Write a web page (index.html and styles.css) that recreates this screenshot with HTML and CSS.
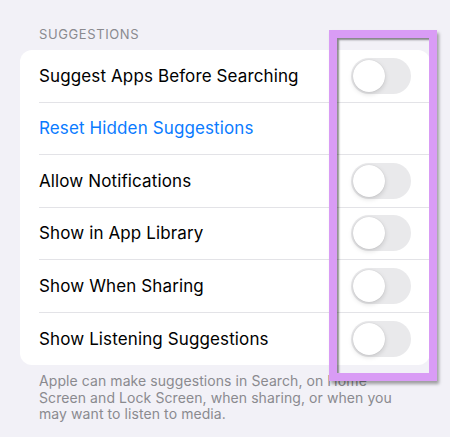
FILE: index.html
```html
<!DOCTYPE html>
<html>
<head>
<meta charset="utf-8">
<link rel="stylesheet" href="styles.css">
</head>
<body>
<div class="page">
  <div class="section-header">SUGGESTIONS</div>
  <div class="card">
    <div class="row"><span class="label">Suggest Apps Before Searching</span><span class="toggle"><span class="knob"></span></span></div>
    <div class="row"><span class="label link">Reset Hidden Suggestions</span></div>
    <div class="row"><span class="label">Allow Notifications</span><span class="toggle"><span class="knob"></span></span></div>
    <div class="row"><span class="label">Show in App Library</span><span class="toggle"><span class="knob"></span></span></div>
    <div class="row"><span class="label">Show When Sharing</span><span class="toggle"><span class="knob"></span></span></div>
    <div class="row"><span class="label">Show Listening Suggestions</span><span class="toggle"><span class="knob"></span></span></div>
  </div>
  <div class="footer">Apple can make suggestions in Search, on Home<br>Screen and Lock Screen, when sharing, or when you<br>may want to listen to media.</div>
  <div class="highlight"></div>
</div>
</body>
</html>
```
FILE: styles.css
```css
html, body {
  margin: 0;
  padding: 0;
  background: #f2f1f7;
}
.page {
  position: relative;
  width: 450px;
  height: 437px;
  overflow: hidden;
  font-family: Inter, "Liberation Sans", Arial, sans-serif;
}
.section-header {
  padding: 26px 0 0 39px;
  height: 24px;
  font-size: 13px;
  letter-spacing: 0.6px;
  color: #8a8a8f;
  line-height: 16px;
}
.card {
  margin: 0 20px 0 20px;
  background: #ffffff;
  border-radius: 12px;
  padding-left: 19px;
}
.row {
  display: flex;
  align-items: center;
  justify-content: space-between;
  height: 52.5px;
  padding-right: 19px;
  border-bottom: 1px solid #e3e3e7;
  box-sizing: border-box;
}
.row:last-child {
  border-bottom: none;
}
.label {
  font-size: 17px;
  letter-spacing: 0.12px;
  color: #000;
}
.link {
  color: #0a7bff;
}
.toggle {
  position: relative;
  width: 60px;
  height: 36px;
  border-radius: 18px;
  background: #e9e9eb;
}
.knob {
  position: absolute;
  left: 2px;
  top: 2px;
  width: 32px;
  height: 32px;
  border-radius: 50%;
  background: #fff;
  box-shadow: 0 2px 5px rgba(0,0,0,0.15), 0 0 1px rgba(0,0,0,0.15);
}
.footer {
  padding: 8px 20px 0 39px;
  font-size: 14px;
  letter-spacing: 0.08px;
  line-height: 16.5px;
  color: #8a8a8f;
}
.highlight {
  position: absolute;
  left: 329px;
  top: 30px;
  width: 108px;
  height: 351px;
  box-sizing: border-box;
  border: 8px solid #d99cf5;
  box-shadow: inset 2px 2px 2px rgba(0,0,0,0.45), 2px 3px 3px rgba(0,0,0,0.35);
}
```
